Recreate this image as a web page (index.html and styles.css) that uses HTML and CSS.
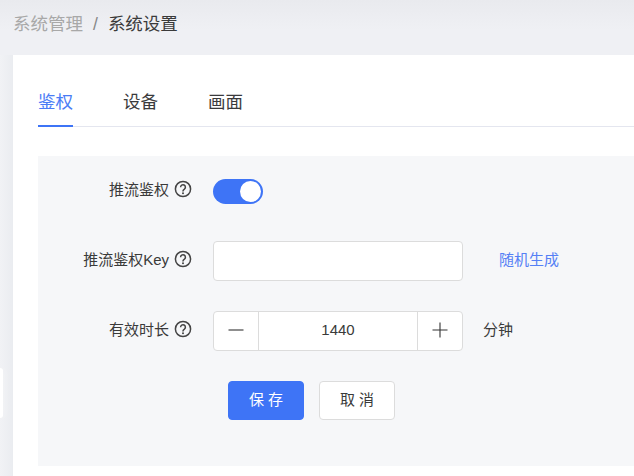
FILE: index.html
```html
<!DOCTYPE html>
<html lang="zh-CN">
<head>
<meta charset="utf-8">
<title>系统设置</title>
<link rel="stylesheet" href="styles.css">
</head>
<body>
<nav class="breadcrumb">
  <span class="crumb-parent">系统管理</span>
  <span class="crumb-sep">/</span>
  <span class="crumb-current">系统设置</span>
</nav>
<div class="side-handle"></div>
<main class="card">
  <div class="tabs">
    <div class="tab tab-active">鉴权</div>
    <div class="tab">设备</div>
    <div class="tab">画面</div>
  </div>
  <form class="panel">
    <div class="row">
      <div class="label"><span class="label-text">推流鉴权</span>
        <svg class="help" viewBox="0 0 18 18"><circle cx="9" cy="9" r="7.6"/><path d="M6.6 7.2a2.4 2.4 0 1 1 3.8 1.9c-.9.6-1.4 1-1.4 1.9v.4"/><circle class="dot" cx="9" cy="13.3" r="1"/></svg>
      </div>
      <div class="switch"><div class="knob"></div></div>
    </div>
    <div class="row">
      <div class="label"><span class="label-text">推流鉴权Key</span>
        <svg class="help" viewBox="0 0 18 18"><circle cx="9" cy="9" r="7.6"/><path d="M6.6 7.2a2.4 2.4 0 1 1 3.8 1.9c-.9.6-1.4 1-1.4 1.9v.4"/><circle class="dot" cx="9" cy="13.3" r="1"/></svg>
      </div>
      <div class="input"></div>
      <a class="link">随机生成</a>
    </div>
    <div class="row">
      <div class="label"><span class="label-text">有效时长</span>
        <svg class="help" viewBox="0 0 18 18"><circle cx="9" cy="9" r="7.6"/><path d="M6.6 7.2a2.4 2.4 0 1 1 3.8 1.9c-.9.6-1.4 1-1.4 1.9v.4"/><circle class="dot" cx="9" cy="13.3" r="1"/></svg>
      </div>
      <div class="stepper">
        <div class="step step-minus"><svg class="step-icon" viewBox="0 0 16 16"><path d="M.5 8h15"/></svg></div>
        <div class="value">1440</div>
        <div class="step step-plus"><svg class="step-icon" viewBox="0 0 16 16"><path d="M.5 8h15M8 .5v15"/></svg></div>
      </div>
      <span class="unit">分钟</span>
    </div>
    <div class="actions">
      <div class="btn btn-primary">保 存</div>
      <div class="btn">取 消</div>
    </div>
  </form>
</main>
</body>
</html>
```
FILE: styles.css
```css
* { box-sizing: border-box; }
html, body { height: 100%; }
body {
  margin: 0;
  height: 476px;
  overflow: hidden;
  position: relative;
  background: linear-gradient(90deg, #f1f2f5, #eaecf0 13px);
  font-family: "Liberation Sans", "Noto Sans CJK SC", sans-serif;
  color: #333;
}
.breadcrumb {
  height: 55px;
  padding: 12px 0 0 13px;
  display: flex;
  align-items: flex-start;
  font-size: 17.5px;
  line-height: 24px;
  background: linear-gradient(#e9eaee, #eff0f4 30px);
}
.crumb-parent { color: #a8a8a8; }
.crumb-sep { color: #888; margin: 0 10px; }
.crumb-current { color: #3a3a3a; }
.side-handle {
  position: absolute;
  left: 0;
  top: 368px;
  width: 3px;
  height: 50px;
  background: #fff;
  border-radius: 0 5px 5px 0;
  box-shadow: 0 0 8px rgba(255, 255, 255, 0.6);
}
.card {
  margin-left: 13px;
  height: 421px;
  background: #fff;
  padding: 25px 0 0 25px;
}
.tabs {
  display: flex;
  gap: 50px;
  height: 47px;
  border-bottom: 1px solid #e4e6ef;
}
.tab {
  height: 47px;
  font-size: 17.5px;
  line-height: 44px;
  color: #3a3a3c;
}
.tab-active {
  color: #4a7cf6;
  border-bottom: 2px solid #3e74f6;
}
.panel {
  margin-top: 29px;
  height: 310px;
  background: #f6f7f9;
  padding: 15px 0 0;
}
.row {
  display: flex;
  align-items: center;
  height: 40px;
  margin-bottom: 30px;
}
.label {
  width: 175px;
  padding-right: 21px;
  display: flex;
  justify-content: flex-end;
  align-items: center;
  gap: 5px;
  font-size: 15px;
  color: #3a3a3a;
}
.label-text {
  line-height: 20px;
  padding-bottom: 2px;
}
.help {
  width: 18px;
  height: 18px;
  flex: none;
  fill: none;
  stroke: #444;
  stroke-width: 1.5;
  margin-top: -4px;
}
.help .dot { fill: #444; stroke: none; }
.switch {
  width: 50px;
  height: 25px;
  border-radius: 13px;
  background: #3e74f6;
  display: flex;
  justify-content: flex-end;
  align-items: center;
  padding-right: 2px;
}
.knob {
  width: 21px;
  height: 21px;
  border-radius: 50%;
  background: #fff;
}
.input {
  width: 250px;
  height: 40px;
  background: #fff;
  border: 1px solid #dcdcdc;
  border-radius: 4px;
}
.link {
  margin-left: 36px;
  font-size: 15px;
  line-height: 20px;
  padding-bottom: 2px;
  color: #5580f5;
}
.stepper {
  width: 250px;
  height: 40px;
  display: flex;
  background: #fff;
  border: 1px solid #dcdcdc;
  border-radius: 4px;
}
.step {
  width: 45px;
  display: flex;
  align-items: center;
  justify-content: center;
}
.step-minus { border-right: 1px solid #dcdcdc; }
.step-plus { border-left: 1px solid #dcdcdc; }
.step-icon {
  width: 16px;
  height: 16px;
  fill: none;
  stroke: #333;
  stroke-width: 1.1;
  margin-bottom: 3px;
}
.value {
  flex: 1;
  text-align: center;
  font-size: 15px;
  line-height: 36px;
  color: #3a3a3a;
}
.unit {
  margin-left: 20px;
  font-size: 15px;
  line-height: 20px;
  padding-bottom: 2px;
  color: #3a3a3a;
}
.actions {
  display: flex;
  gap: 15px;
  margin-left: 190px;
}
.btn {
  width: 76px;
  height: 39px;
  border: 1px solid #dcdcdc;
  border-radius: 4px;
  background: #fff;
  font-size: 15px;
  line-height: 35px;
  text-align: center;
  color: #3a3a3a;
}
.btn-primary {
  background: #3e74f6;
  border-color: #3e74f6;
  color: #fff;
}
```
